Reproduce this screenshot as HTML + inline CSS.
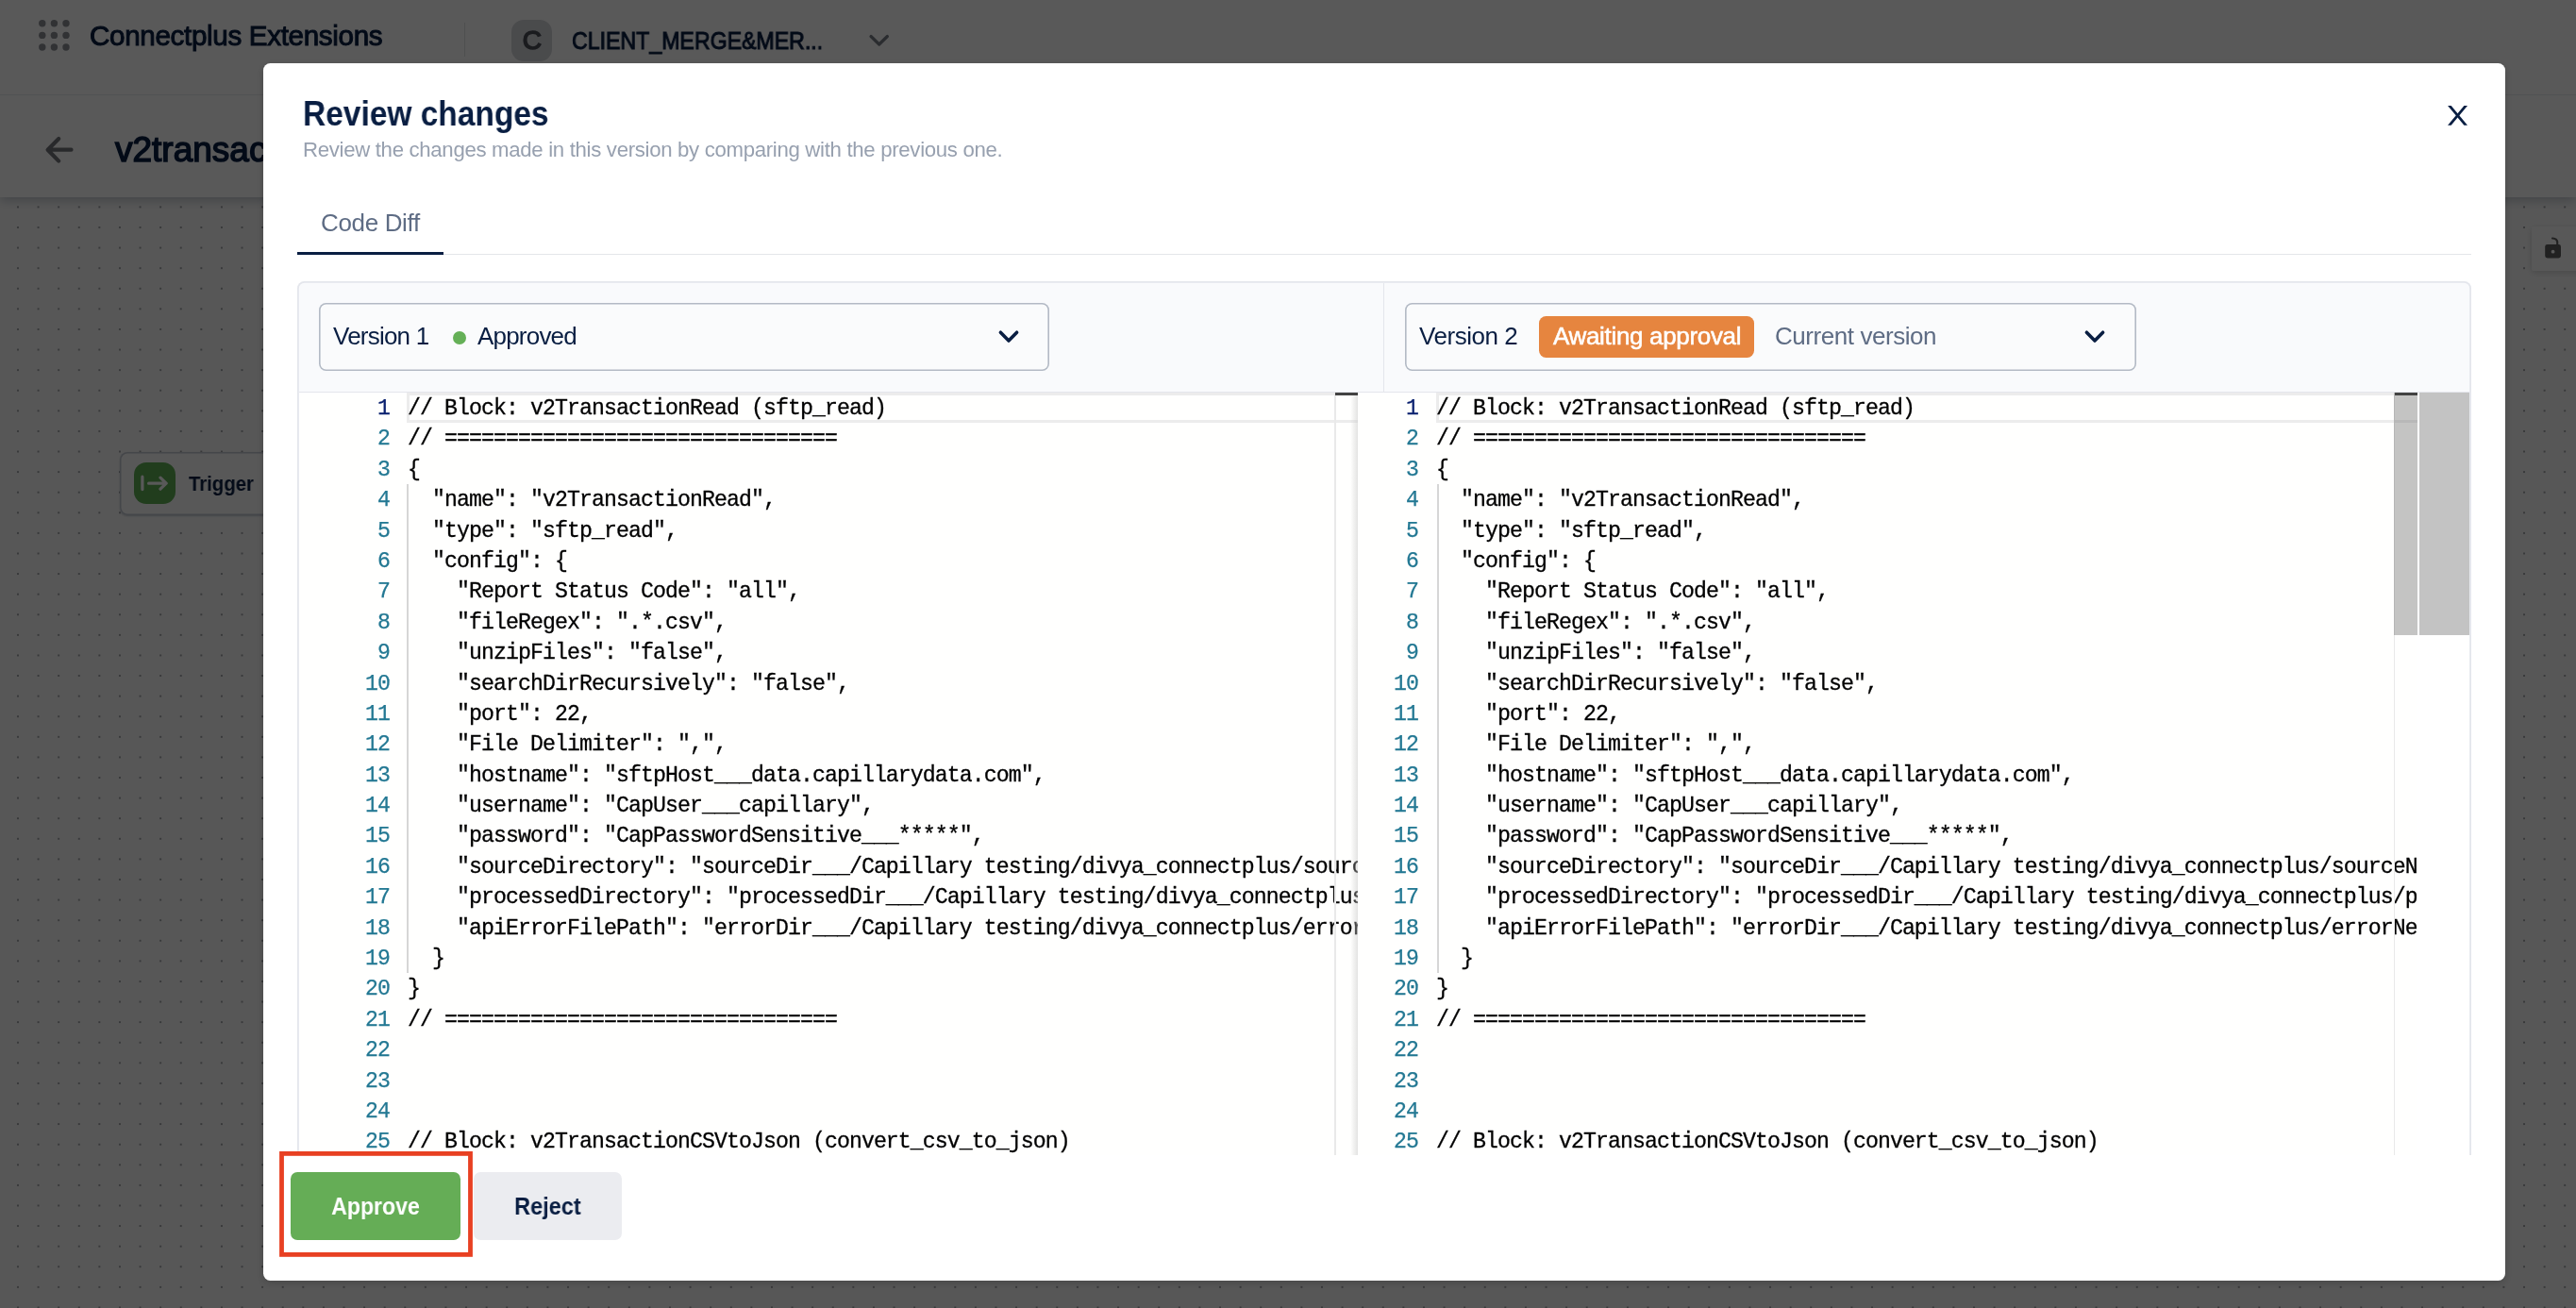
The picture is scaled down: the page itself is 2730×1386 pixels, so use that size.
<!DOCTYPE html>
<html>
<head>
<meta charset="utf-8">
<title>Review changes</title>
<style>
*{box-sizing:border-box;margin:0;padding:0}
html,body{width:2730px;height:1386px;overflow:hidden;background:#fff}
body{font-family:"Liberation Sans",sans-serif;color:#091e42;position:relative}
.abs{position:absolute}
.t{position:absolute;white-space:nowrap;line-height:1}
.med{-webkit-text-stroke:1.0px currentColor}
.med2{-webkit-text-stroke:1.5px currentColor}

/* ---------- underlying page ---------- */
#page{position:absolute;left:0;top:0;width:2730px;height:1386px;background:#fafafa}
#canvas{position:absolute;left:0;top:208px;width:2730px;height:1178px;background-color:#fafafa;
  background-image:radial-gradient(circle,#a2a4a8 0,#a2a4a8 1.0px,rgba(162,164,168,0) 1.45px);
  background-size:21.6px 21.6px;background-position:8.2px 0.6px}
#bar1{position:absolute;left:0;top:0;width:2730px;height:101px;background:#fff;border-bottom:1.8px solid #e9eaee}
#bar2{position:absolute;left:0;top:101px;width:2730px;height:108px;background:#fff;box-shadow:0 4px 10px rgba(9,30,66,.22)}
#overlay{position:absolute;left:0;top:0;width:2730px;height:1386px;background:rgba(0,0,0,.65)}

/* ---------- modal ---------- */
#modal{position:absolute;left:278.6px;top:66.5px;width:2376.6px;height:1290.7px;background:#fff;border-radius:7.5px;
  box-shadow:0 3px 10px rgba(0,0,0,.2)}

/* code */
.ed{position:absolute;top:415.5px;height:808px;overflow:hidden;background:#fffffe}
.ln,.cl{position:absolute;font-family:"Liberation Mono",monospace;font-size:23.2px;letter-spacing:-0.918px;
  line-height:32.4px}
.ln{text-align:right;color:#237893}
.cl{color:#000;overflow:hidden;-webkit-text-stroke:0.3px #000}
.ln{-webkit-text-stroke:0.25px currentColor}
.ln div,.cl div{height:32.4px;white-space:pre}
.ln,.cl,.t{will-change:transform}
</style>
</head>
<body>
<div id="page">
  <div id="canvas"></div>
  <div id="bar2"></div>
  <div id="bar1"></div>
  <!-- grid icon -->
  <svg class="abs" style="left:40px;top:20px" width="36" height="36" viewBox="0 0 36 36">
    <g fill="#8c8f96">
      <circle cx="4.8" cy="4.8" r="3.7"/><circle cx="17.4" cy="4.8" r="3.7"/><circle cx="30" cy="4.8" r="3.7"/>
      <circle cx="4.8" cy="17.4" r="3.7"/><circle cx="17.4" cy="17.4" r="3.7"/><circle cx="30" cy="17.4" r="3.7"/>
      <circle cx="4.8" cy="30" r="3.7"/><circle cx="17.4" cy="30" r="3.7"/><circle cx="30" cy="30" r="3.7"/>
    </g>
  </svg>
  <div class="t med" id="brand" style="left:95px;top:21px;font-size:29.6px;line-height:34px;letter-spacing:-0.33px">Connectplus Extensions</div>
  <div class="abs" style="left:491.5px;top:24px;width:1.8px;height:36px;background:#dfe1e6"></div>
  <div class="abs" style="left:541.5px;top:21px;width:43.5px;height:43.5px;border-radius:13px;background:#d4d6db"></div>
  <div class="t med2" id="avc" style="left:541.5px;top:27px;width:43.5px;text-align:center;font-size:28px;line-height:32px;color:#4b4f57">C</div>
  <div class="t med" id="client" style="left:606px;top:27px;font-size:26px;line-height:32px;transform:scaleX(0.89);transform-origin:left center">CLIENT_MERGE&amp;MER...</div>
  <svg class="abs" style="left:918px;top:33px" width="28" height="20" viewBox="0 0 28 20">
    <path d="M5 5.5 L13.7 14 L22.4 5.5" fill="none" stroke="#7a7f88" stroke-width="3.2" stroke-linecap="round" stroke-linejoin="round"/>
  </svg>
  <!-- back arrow + title -->
  <svg class="abs" style="left:46px;top:142px" width="36" height="34" viewBox="0 0 36 34">
    <path d="M29.5 16.7 H5.5 M16.2 5 L4.6 16.7 L16.2 28.6" fill="none" stroke="#74767b" stroke-width="4.2" stroke-linecap="round" stroke-linejoin="round"/>
  </svg>
  <div class="t med2" id="flow" style="left:121.5px;top:137px;font-size:37px;line-height:44px">v2transaction</div>
  <!-- trigger node -->
  <div class="abs" style="left:127px;top:478.6px;width:260px;height:67px;box-shadow:inset 0 0 0 1.5px #c3c8d2,0 1px 2px rgba(9,30,66,.22);border-radius:8px;background:#fbfbfc"></div>
  <div class="abs" style="left:141.8px;top:490.1px;width:44.1px;height:43.6px;border-radius:13px;background:#5fae55"></div>
  <svg class="abs" style="left:142px;top:490.5px" width="44" height="43" viewBox="0 0 44 43">
    <path d="M8.9 14.2 V27.6 M15.6 21.2 H33.4 M28 15.2 L34.2 21.2 L28 27.2" fill="none" stroke="#ffffff" stroke-width="3.2" stroke-linecap="round" stroke-linejoin="round"/>
  </svg>
  <div class="t" id="trig" style="left:200px;top:499px;font-size:22.6px;line-height:28px;font-weight:bold;transform:scaleX(0.9);transform-origin:left center">Trigger</div>
  <!-- lock button -->
  <div class="abs" style="left:2682.8px;top:240px;width:60px;height:47.3px;background:#fcfcfc;border-radius:2px;box-shadow:0 2px 7px rgba(0,0,0,.16)"></div>
  <svg class="abs" style="left:2694px;top:250px" width="24" height="26" viewBox="0 0 24 26">
    <rect x="3.2" y="9" width="16.8" height="14.5" rx="2.4" fill="#5e5e5e"/>
    <path d="M16.2 9.6 V6.4 Q16 2.9 11 2.5" fill="none" stroke="#5e5e5e" stroke-width="2.1" stroke-linecap="round"/>
    <circle cx="11.6" cy="16.7" r="1.9" fill="#fcfcfc"/>
  </svg>
</div>
<div id="overlay"></div>
<div id="modal"></div>
<div id="mc" class="abs" style="left:0;top:0;width:2730px;height:1386px">
  <div class="t" id="title" style="left:321px;top:99px;font-size:37px;line-height:44px;font-weight:bold;transform:scaleX(0.905);transform-origin:left center">Review changes</div>
  <div class="t" id="sub" style="left:321px;top:145px;font-size:22.2px;line-height:28px;color:#97a0af;letter-spacing:-0.31px">Review the changes made in this version by comparing with the previous one.</div>
  <!-- close X -->
  <svg class="abs" style="left:2590px;top:107px" width="30" height="30" viewBox="0 0 30 30">
    <polygon points="4.1,4.9 7.7,4.9 25,25.8 21.4,25.8" fill="#091e42"/><polygon points="21.4,4.9 25,4.9 7.7,25.8 4.1,25.8" fill="#091e42"/>
  </svg>
  <!-- tabs -->
  <div class="abs" style="left:315px;top:268.6px;width:2304px;height:1.8px;background:#e4e6ea"></div>
  <div class="abs" style="left:315px;top:266.6px;width:155px;height:3.7px;background:#091e42"></div>
  <div class="t" id="tab" style="left:340px;top:220px;font-size:26px;line-height:32px;color:#5e6c84;letter-spacing:-0.35px">Code Diff</div>

  <!-- diff container -->
  <div class="abs" id="dc" style="left:315.2px;top:298.2px;width:2304px;height:940px;box-shadow:inset 0 0 0 1.8px #e4e6ec;border-radius:7.5px;background:#f9fafc"></div>
  <div class="abs" style="left:1465.7px;top:300px;width:1.8px;height:116px;background:#e4e6ec"></div>
  <div class="abs" style="left:316.8px;top:414.6px;width:2300.4px;height:1.8px;background:#e4e6ec"></div>

  <!-- select 1 -->
  <div class="abs" style="left:337.6px;top:320.8px;width:774.4px;height:72px;box-shadow:inset 0 0 0 1.6px #b3bac5;border-radius:7.5px;background:#fafbfc"></div>
  <div class="t" id="v1" style="left:353.3px;top:340px;font-size:26px;line-height:32px;letter-spacing:-0.78px">Version 1</div>
  <div class="abs" style="left:480px;top:351px;width:14.4px;height:14.4px;border-radius:50%;background:#65b057"></div>
  <div class="t" id="apd" style="left:505.6px;top:340px;font-size:26px;line-height:32px;letter-spacing:-0.8px">Approved</div>
  <svg class="abs" style="left:1055px;top:345px" width="28" height="24" viewBox="0 0 28 24">
    <path d="M5.4 7.2 L14 16 L22.6 7.2" fill="none" stroke="#091e42" stroke-width="3.6" stroke-linecap="round" stroke-linejoin="round"/>
  </svg>

  <!-- select 2 -->
  <div class="abs" style="left:1488.6px;top:320.8px;width:775.4px;height:72px;box-shadow:inset 0 0 0 1.6px #b3bac5;border-radius:7.5px;background:#fafbfc"></div>
  <div class="t" id="v2" style="left:1504.3px;top:340px;font-size:26px;line-height:32px;letter-spacing:-0.46px">Version 2</div>
  <div class="abs" style="left:1631px;top:335px;width:228px;height:44px;border-radius:7.5px;background:#e6853f"></div>
  <div class="t" id="aw" style="-webkit-text-stroke:0.55px #fff;left:1645.5px;top:340px;font-size:26px;line-height:32px;color:#fff;letter-spacing:-0.33px">Awaiting approval</div>
  <div class="t" id="cv" style="left:1881px;top:340px;font-size:26px;line-height:32px;color:#5e6c84;letter-spacing:-0.44px">Current version</div>
  <svg class="abs" style="left:2206px;top:345px" width="28" height="24" viewBox="0 0 28 24">
    <path d="M5.4 7.2 L14 16 L22.6 7.2" fill="none" stroke="#091e42" stroke-width="3.6" stroke-linecap="round" stroke-linejoin="round"/>
  </svg>

  <!-- EDITORS -->
  <div class="ed" id="edl" style="left:316.8px;width:1122.2px">
  <div class="abs" style="left:114.1px;top:0.7px;width:1122.2px;height:31.7px;border:3px solid #ececec"></div>
  <div class="abs" style="left:114.6px;top:97.2px;width:2px;height:518.4px;background:#d6d6d6"></div>
  <div class="ln" style="left:35.8px;width:60px;top:1.3px">
  <div style="color:#0b216f">1</div>
  <div>2</div>
  <div>3</div>
  <div>4</div>
  <div>5</div>
  <div>6</div>
  <div>7</div>
  <div>8</div>
  <div>9</div>
  <div>10</div>
  <div>11</div>
  <div>12</div>
  <div>13</div>
  <div>14</div>
  <div>15</div>
  <div>16</div>
  <div>17</div>
  <div>18</div>
  <div>19</div>
  <div>20</div>
  <div>21</div>
  <div>22</div>
  <div>23</div>
  <div>24</div>
  <div>25</div>
  </div>
  <div class="cl" style="left:114.9px;top:1.3px;width:1007.3px">
  <div>// Block: v2TransactionRead (sftp_read)</div>
  <div>// ================================</div>
  <div>{</div>
  <div>  "name": "v2TransactionRead",</div>
  <div>  "type": "sftp_read",</div>
  <div>  "config": {</div>
  <div>    "Report Status Code": "all",</div>
  <div>    "fileRegex": ".*.csv",</div>
  <div>    "unzipFiles": "false",</div>
  <div>    "searchDirRecursively": "false",</div>
  <div>    "port": 22,</div>
  <div>    "File Delimiter": ",",</div>
  <div>    "hostname": "sftpHost___data.capillarydata.com",</div>
  <div>    "username": "CapUser___capillary",</div>
  <div>    "password": "CapPasswordSensitive___*****",</div>
  <div>    "sourceDirectory": "sourceDir___/Capillary testing/divya_connectplus/sourceNew",</div>
  <div>    "processedDirectory": "processedDir___/Capillary testing/divya_connectplus/processedNew",</div>
  <div>    "apiErrorFilePath": "errorDir___/Capillary testing/divya_connectplus/errorNew",</div>
  <div>  }</div>
  <div>}</div>
  <div>// ================================</div>
  <div></div>
  <div></div>
  <div></div>
  <div>// Block: v2TransactionCSVtoJson (convert_csv_to_json)</div>
  </div>
  <div class="abs" style="left:1097.4px;top:0;width:1.6px;height:808px;background:#e9e9e9"></div>
  <div class="abs" style="left:1114.2px;top:0;width:8px;height:808px;background:linear-gradient(to right,rgba(221,221,221,0),rgba(200,200,200,.5))"></div>
  <div class="abs" style="left:1098px;top:0.4px;width:24.2px;height:3.2px;background:#424242"></div>
  </div>
  <div class="ed" id="edr" style="left:1439px;width:1122.8px">
  <div class="abs" style="left:83.1px;top:0.7px;width:1122.8px;height:31.7px;border:3px solid #ececec"></div>
  <div class="abs" style="left:83.6px;top:97.2px;width:2px;height:518.4px;background:#d6d6d6"></div>
  <div class="ln" style="left:3.8px;width:60px;top:1.3px">
  <div style="color:#0b216f">1</div>
  <div>2</div>
  <div>3</div>
  <div>4</div>
  <div>5</div>
  <div>6</div>
  <div>7</div>
  <div>8</div>
  <div>9</div>
  <div>10</div>
  <div>11</div>
  <div>12</div>
  <div>13</div>
  <div>14</div>
  <div>15</div>
  <div>16</div>
  <div>17</div>
  <div>18</div>
  <div>19</div>
  <div>20</div>
  <div>21</div>
  <div>22</div>
  <div>23</div>
  <div>24</div>
  <div>25</div>
  </div>
  <div class="cl" style="left:82.8px;top:1.3px;width:1039.2px">
  <div>// Block: v2TransactionRead (sftp_read)</div>
  <div>// ================================</div>
  <div>{</div>
  <div>  "name": "v2TransactionRead",</div>
  <div>  "type": "sftp_read",</div>
  <div>  "config": {</div>
  <div>    "Report Status Code": "all",</div>
  <div>    "fileRegex": ".*.csv",</div>
  <div>    "unzipFiles": "false",</div>
  <div>    "searchDirRecursively": "false",</div>
  <div>    "port": 22,</div>
  <div>    "File Delimiter": ",",</div>
  <div>    "hostname": "sftpHost___data.capillarydata.com",</div>
  <div>    "username": "CapUser___capillary",</div>
  <div>    "password": "CapPasswordSensitive___*****",</div>
  <div>    "sourceDirectory": "sourceDir___/Capillary testing/divya_connectplus/sourceNew",</div>
  <div>    "processedDirectory": "processedDir___/Capillary testing/divya_connectplus/processedNew",</div>
  <div>    "apiErrorFilePath": "errorDir___/Capillary testing/divya_connectplus/errorNew",</div>
  <div>  }</div>
  <div>}</div>
  <div>// ================================</div>
  <div></div>
  <div></div>
  <div></div>
  <div>// Block: v2TransactionCSVtoJson (convert_csv_to_json)</div>
  </div>
  <div class="abs" style="left:1097.8px;top:0;width:1.6px;height:808px;background:#e9e9e9"></div>
  <div class="abs" style="left:1098.2px;top:0;width:24.6px;height:257.2px;background:rgba(100,100,100,.38)"></div>
  <div class="abs" style="left:1098.6px;top:0.4px;width:24.2px;height:3.2px;background:#424242"></div>
  </div>
  <div class="abs" style="left:2561.8px;top:415.5px;width:55.4px;height:808px;background:#fff"></div>
  <div class="abs" style="left:2564px;top:415.5px;width:53.4px;height:257.2px;background:#c3c3c3"></div>
  <!-- /EDITORS -->

  <!-- footer -->
  <div class="abs" style="left:279px;top:1223.5px;width:2376px;height:125px;background:#fff"></div>
  <div class="abs" style="left:308px;top:1242px;width:180px;height:72px;border-radius:7.2px;background:#65ad56"></div>
  <div class="t" id="apv" style="left:308px;top:1262px;width:180px;text-align:center;font-size:25.6px;line-height:32px;font-weight:bold;color:#fff;transform:scaleX(0.9);transform-origin:center center">Approve</div>
  <div class="abs" style="left:502.2px;top:1242px;width:156.8px;height:72px;border-radius:7.2px;background:#ebecf0"></div>
  <div class="t" id="rej" style="left:502.2px;top:1262px;width:156.8px;text-align:center;font-size:25.6px;line-height:32px;font-weight:bold;transform:scaleX(0.92);transform-origin:center center">Reject</div>
  <svg class="abs" style="left:290px;top:1214px" width="220" height="126" viewBox="0 0 220 126"><rect x="8.5" y="8.4" width="200" height="107" fill="none" stroke="#e84022" stroke-width="4.8"/></svg>
</div>
</body>
</html>
